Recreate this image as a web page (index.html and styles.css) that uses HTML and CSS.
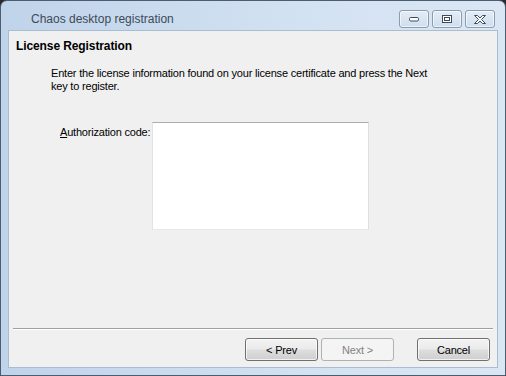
FILE: index.html
```html
<!DOCTYPE html>
<html>
<head>
    <title>Chaos desktop registration</title>
    <link rel="stylesheet" href="styles.css">
</head>
<body>
    <div class="window">
        <div class="titlebar">
            <span class="title">Chaos desktop registration</span>
            <div class="caption-buttons">
                <span class="cap-btn">
                    <svg width="12" height="6" viewBox="0 0 12 6"><rect x="1.5" y="1.5" width="9" height="3.5" rx="1.2" fill="#fff" stroke="#3c4a5c"/></svg>
                </span>
                <span class="cap-btn">
                    <svg width="12" height="10" viewBox="0 0 12 10"><rect x="1.5" y="1.5" width="9" height="7" fill="#fff" stroke="#3c4a5c"/><rect x="3.5" y="3.5" width="5" height="3" fill="#fff" stroke="#3c4a5c"/></svg>
                </span>
                <span class="cap-btn">
                    <svg width="14" height="11" viewBox="0 0 14 11"><path d="M1.5 1.5h3l2.5 2.5 2.5-2.5h3l-4 4 4 4h-3l-2.5-2.5-2.5 2.5h-3l4-4z" fill="#fff" stroke="#3c4a5c" stroke-linejoin="round"/></svg>
                </span>
            </div>
        </div>
        <div class="client">
            <h1 class="heading">License Registration</h1>
            <p class="intro">Enter the license information found on your license certificate and press the Next<br>key to register.</p>
            <div class="form-row">
                <label class="field-label" for="auth"><u>A</u>uthorization code:</label>
                <textarea id="auth" class="auth-code"></textarea>
            </div>
            <div class="spacer"></div>
            <div class="separator"></div>
            <div class="button-row">
                <button class="btn">&lt; Prev</button>
                <button class="btn" disabled>Next &gt;</button>
                <button class="btn btn-cancel">Cancel</button>
            </div>
        </div>
    </div>
</body>
</html>
```

FILE: styles.css
```css
html, body {
    margin: 0;
    padding: 0;
    background: #2b2b2b;
}
.window {
    width: 506px;
    height: 376px;
    box-sizing: border-box;
    border: 1px solid #4c5d70;
    border-radius: 7px 7px 0 0;
    background: linear-gradient(to right, #bfd3ea, #d3e2f2 60%, #dae6f3);
    display: flex;
    flex-direction: column;
    overflow: hidden;
}
.titlebar {
    height: 29px;
    display: flex;
    align-items: flex-start;
}
.title {
    font-family: "Liberation Sans", Arial, sans-serif;
    font-size: 12px;
    color: #3d4a59;
    margin: 10px 0 0 30px;
    line-height: 16px;
    flex: 1;
}
.caption-buttons {
    display: flex;
    gap: 3px;
    margin: 9px 10px 0 0;
}
.cap-btn {
    width: 28px;
    height: 16px;
    border: 1px solid #8c9cb0;
    border-radius: 3px;
    background: linear-gradient(#e4edf7, #cfdded);
    box-shadow: inset 0 0 0 1px rgba(255,255,255,0.6);
    display: flex;
    align-items: center;
    justify-content: center;
}
.client {
    flex: 1;
    margin: 0 7px 7px 7px;
    border: 1px solid #a8bcd2;
    background: #f0f0f0;
    display: flex;
    flex-direction: column;
    font-family: "Liberation Sans", Arial, sans-serif;
    font-size: 11px;
    letter-spacing: -0.2px;
    color: #000;
}
.heading {
    font-size: 12px;
    font-weight: bold;
    letter-spacing: -0.1px;
    margin: 8px 0 0 7px;
    line-height: 14px;
}
.intro {
    margin: 14px 0 0 42px;
    line-height: 13px;
}
.form-row {
    display: flex;
    margin: 29px 0 0 51px;
    align-items: flex-start;
}
.field-label {
    line-height: 13px;
    margin-top: 4px;
    margin-right: 2px;
}
.auth-code {
    width: 217px;
    height: 108px;
    box-sizing: border-box;
    resize: none;
    border: 1px solid #e3e9ef;
    border-top-color: #abadb3;
    border-left-color: #e2e3ea;
    border-right-color: #dbdfe6;
    background: #fff;
    padding: 2px;
    margin: 0;
    outline: none;
}
.spacer {
    flex: 1;
}
.separator {
    margin: 0 4px 0 4px;
    border-top: 1px solid #a0a0a0;
    border-bottom: 1px solid #fff;
}
.button-row {
    display: flex;
    justify-content: flex-end;
    gap: 3px;
    margin: 8px 7px 6px 0;
}
.btn {
    width: 73px;
    height: 23px;
    font-family: "Liberation Sans", Arial, sans-serif;
    font-size: 11px;
    letter-spacing: -0.2px;
    color: #000;
    border: 1px solid #707070;
    border-radius: 3px;
    background: linear-gradient(#f2f2f2 0%, #ebebeb 48%, #dddddd 52%, #cfcfcf 100%);
    box-shadow: inset 0 0 0 1px rgba(255,255,255,0.7);
    padding: 0;
}
.btn:disabled {
    color: #838383;
    border-color: #adb2b5;
    background: #f4f4f4;
    box-shadow: none;
}
.btn-cancel {
    margin-left: 20px;
}
```
